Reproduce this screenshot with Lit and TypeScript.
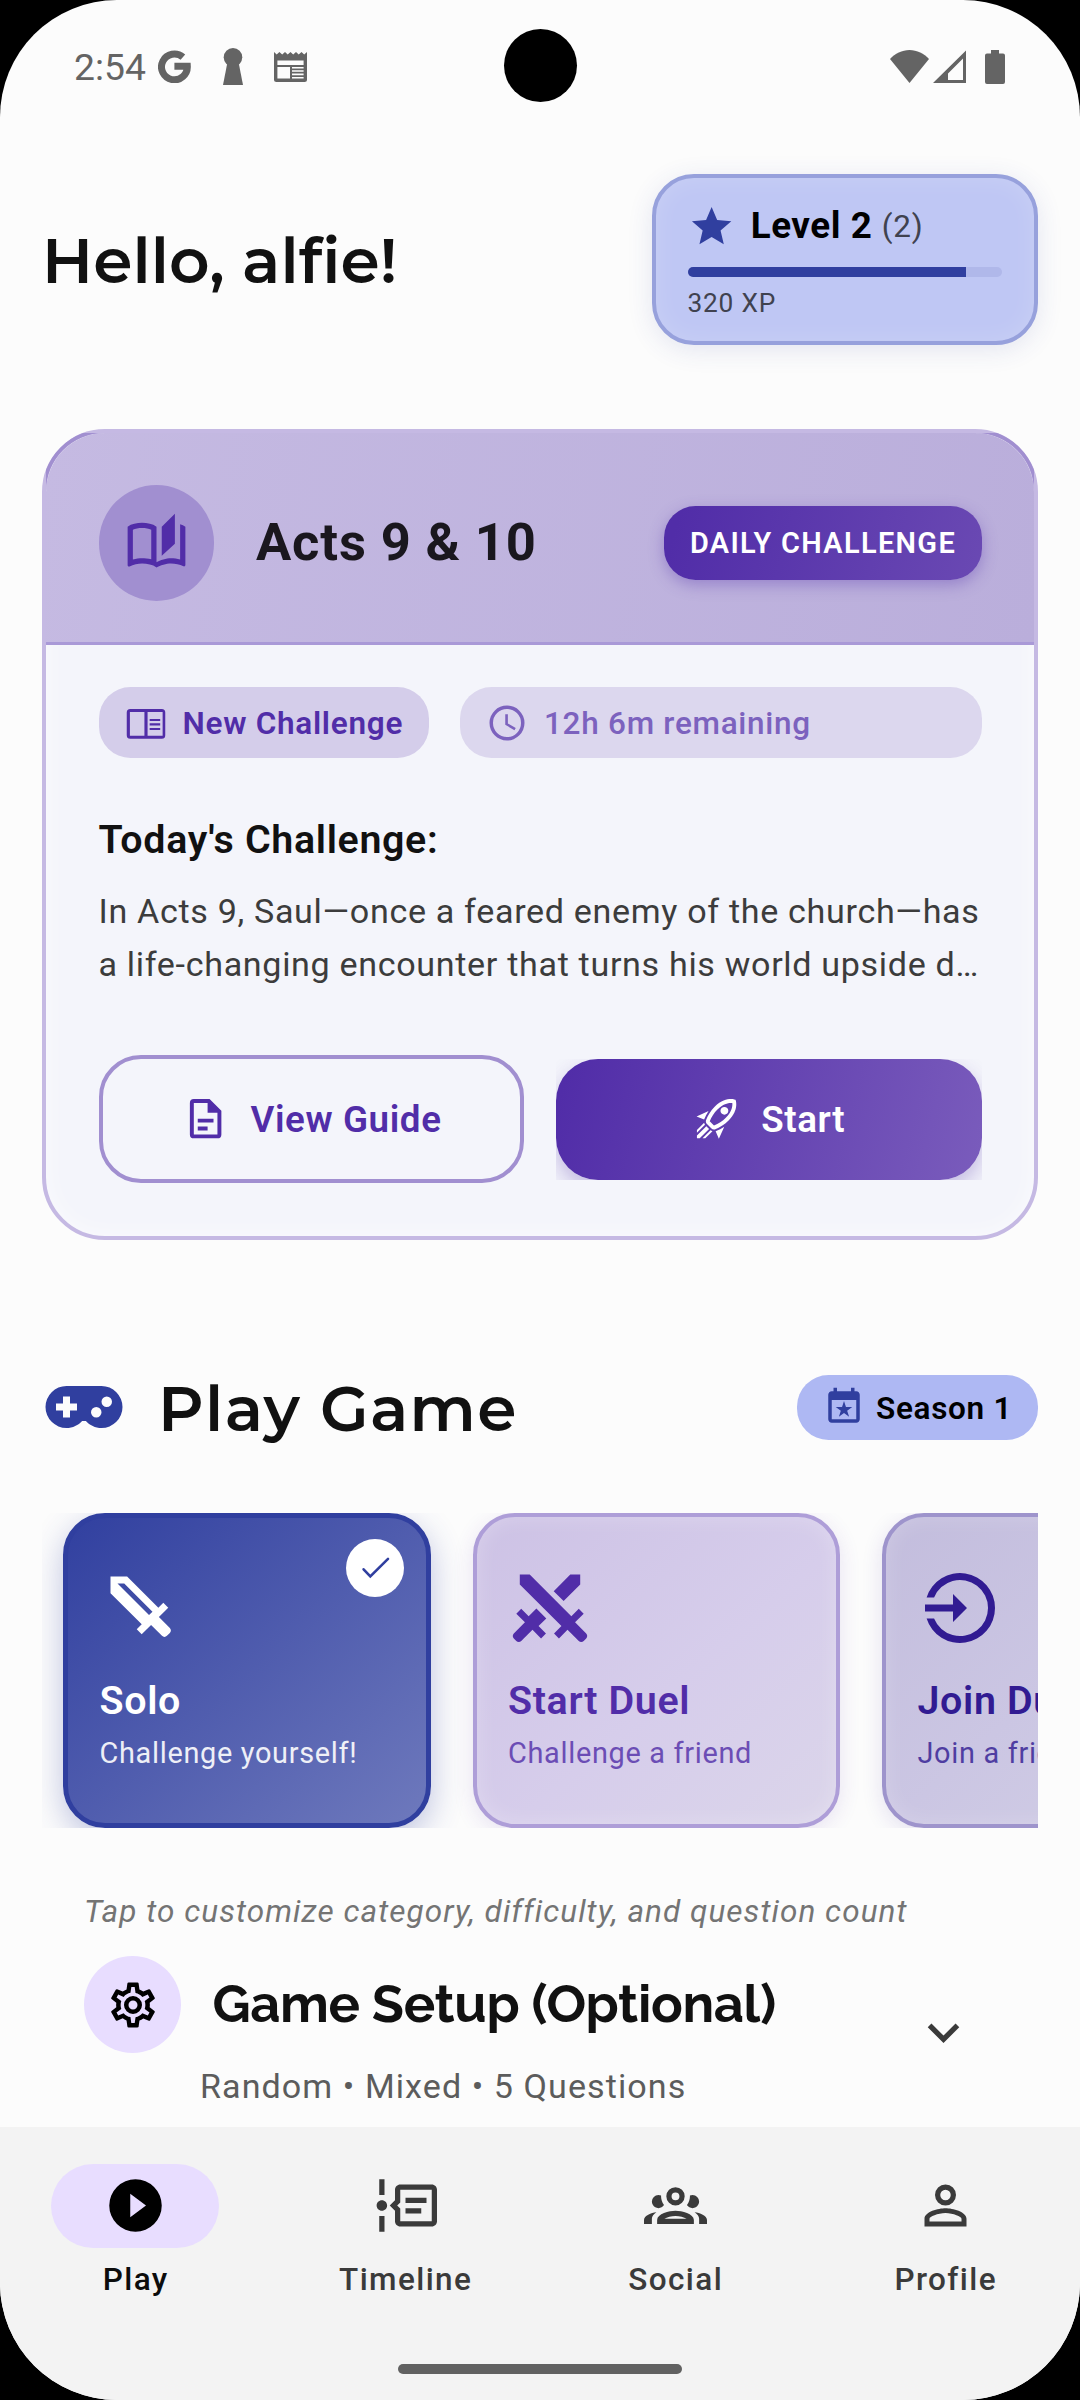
import { LitElement, html, css, svg, nothing } from "lit";
import { customElement, property } from "lit/decorators.js";
import { classMap } from "lit/directives/class-map.js";

const ICONS: Record<string, string> = {
  star: "M12,17.27L18.18,21L16.54,13.97L22,9.24L14.81,8.62L12,2L9.19,8.62L2,9.24L7.45,13.97L5.82,21L12,17.27Z",
  story:
    "M19 1L14 6V17L19 12.5V1M21 5V18.5C19.9 18.15 18.7 18 17.5 18C15.8 18 13.35 18.65 12 19.5V6C10.55 4.9 8.45 4.5 6.5 4.5C4.55 4.5 2.45 4.9 1 6V20.65C1 20.9 1.25 21.15 1.5 21.15C1.6 21.15 1.65 21.1 1.75 21.1C3.1 20.45 5.05 20 6.5 20C8.45 20 10.55 20.4 12 21.5C13.35 20.65 15.8 20 17.5 20C19.15 20 20.85 20.3 22.25 21.05C22.35 21.1 22.4 21.1 22.5 21.1C22.75 21.1 23 20.85 23 20.6V6C22.4 5.55 21.75 5.25 21 5M10 18.41C8.75 18.09 7.5 18 6.5 18C5.44 18 4.18 18.19 3 18.5V7.13C3.91 6.73 5.14 6.5 6.5 6.5C7.86 6.5 9.09 6.73 10 7.13V18.41Z",
  book: "M14.1,12.1H20.1V13.4H14.1M14.1,9.7H20.1V10.9H14.1M14.1,14.8H20.1V16H14.1M21,4H3A2,2 0 0,0 1,6V19A2,2 0 0,0 3,21H21A2,2 0 0,0 23,19V6A2,2 0 0,0 21,4M2.8,19.3V5.7H11.1V19.3H2.8M21.5,19.3H12.9V5.7H21.5V19.3Z",
  clock:
    "M12,20A8,8 0 0,0 20,12A8,8 0 0,0 12,4A8,8 0 0,0 4,12A8,8 0 0,0 12,20M12,2A10,10 0 0,1 22,12A10,10 0 0,1 12,22C6.47,22 2,17.5 2,12A10,10 0 0,1 12,2M12.5,7V12.25L17,14.92L16.25,16.15L11,13V7H12.5Z",
  doc: "M6,2A2,2 0 0,0 4,4V20A2,2 0 0,0 6,22H18A2,2 0 0,0 20,20V8L14,2H6M6,4H13V9H18V20H6V4M8,12V14H16V12H8M8,16V18H13V16H8Z",
  rocket:
    "M13.13 22.19L11.5 18.36C13.07 17.78 14.54 17 15.9 16.09L13.13 22.19M5.64 12.5L1.81 10.87L7.91 8.1C7 9.46 6.22 10.93 5.64 12.5M19.22 4C19.5 4 19.75 4 19.96 4.05C20.13 5.44 19.94 8.3 16.66 11.58C14.96 13.29 12.93 14.6 10.65 15.47L8.5 13.37C9.42 11.06 10.73 9.03 12.42 7.34C15.18 4.58 17.64 4 19.22 4M19.22 2C17.24 2 14.24 2.69 11 5.93C8.81 8.12 7.5 10.53 6.65 12.64C6.37 13.39 6.56 14.21 7.11 14.77L9.24 16.89C9.62 17.27 10.13 17.5 10.66 17.5C10.89 17.5 11.13 17.44 11.36 17.35C13.5 16.53 15.88 15.19 18.07 13C23.73 7.34 21.61 2.39 21.61 2.39S20.7 2 19.22 2M14.54 9.46C13.76 8.68 13.76 7.41 14.54 6.63S16.59 5.85 17.37 6.63C18.14 7.41 18.15 8.68 17.37 9.46C16.59 10.24 15.32 10.24 14.54 9.46M8.88 16.53L7.47 15.12L8.88 16.53M6.24 22L9.88 18.36C9.54 18.27 9.21 18.12 8.91 17.91L4.83 22H6.24M2 22H3.41L8.18 17.24L6.76 15.83L2 20.59V22M2 19.17L6.09 15.09C5.88 14.79 5.73 14.47 5.64 14.12L2 17.76V19.17Z",
  gamepad:
    "M7,6H17A6,6 0 0,1 23,12A6,6 0 0,1 17,18C15.22,18 13.63,17.23 12.53,16H11.47C10.37,17.23 8.78,18 7,18A6,6 0 0,1 1,12A6,6 0 0,1 7,6M6,9V11H4V13H6V15H8V13H10V11H8V9H6M15.5,12A1.5,1.5 0 0,0 14,13.5A1.5,1.5 0 0,0 15.5,15A1.5,1.5 0 0,0 17,13.5A1.5,1.5 0 0,0 15.5,12M18.5,9A1.5,1.5 0 0,0 17,10.5A1.5,1.5 0 0,0 18.5,12A1.5,1.5 0 0,0 20,10.5A1.5,1.5 0 0,0 18.5,9Z",
  season:
    "M19 19H5V8H19M16 1V3H8V1H6V3H5C3.89 3 3 3.89 3 5V19C3 20.11 3.9 21 5 21H19C20.11 21 21 20.11 21 19V5C21 3.9 20.11 3 19 3H18V1M10.88 12H7.27L10.19 14.11L9.08 17.56L12 15.43L14.92 17.56L13.8 14.12L16.72 12H13.12L12 8.56L10.88 12Z",
  sword:
    "M6.92,5H5L14,14L15,13.06M19.96,19.12L19.12,19.96C18.73,20.35 18.1,20.35 17.71,19.96L14.59,16.84L11.91,19.5L10.5,18.09L11.92,16.67L3,7.75V3H7.75L16.67,11.92L18.09,10.5L19.5,11.91L16.83,14.58L19.95,17.7C20.35,18.1 20.35,18.73 19.96,19.12Z",
  swords:
    "M6.2,2.44L18.1,14.34L20.22,12.22L21.63,13.63L19.16,16.1L22.34,19.28C22.73,19.67 22.73,20.3 22.34,20.69L21.63,21.4C21.24,21.79 20.61,21.79 20.22,21.4L17,18.23L14.56,20.7L13.15,19.29L15.27,17.17L3.37,5.27V2.44H6.2M15.89,10L20.63,5.26V2.44H17.8L13.06,7.18L15.89,10M10.94,15L8.11,12.13L5.9,14.34L3.78,12.22L2.37,13.63L4.84,16.1L1.66,19.29C1.27,19.68 1.27,20.31 1.66,20.7L2.37,21.41C2.76,21.8 3.39,21.8 3.78,21.41L7,18.23L9.44,20.7L10.85,19.29L8.73,17.17L10.94,15Z",
  enter:
    "M14,12L10,8V11H2V13H10V16M22,12A10,10 0 0,1 2.46,15H4.59A8,8 0 1,0 4.59,9H2.46A10,10 0 0,1 22,12Z",
  cog: "M12,8A4,4 0 0,1 16,12A4,4 0 0,1 12,16A4,4 0 0,1 8,12A4,4 0 0,1 12,8M12,10A2,2 0 0,0 10,12A2,2 0 0,0 12,14A2,2 0 0,0 14,12A2,2 0 0,0 12,10M10,22C9.75,22 9.54,21.82 9.5,21.58L9.13,18.93C8.5,18.68 7.96,18.34 7.44,17.94L4.95,18.95C4.73,19.03 4.46,18.95 4.34,18.73L2.34,15.27C2.21,15.05 2.27,14.78 2.46,14.63L4.57,12.97L4.5,12L4.57,11L2.46,9.37C2.27,9.22 2.21,8.95 2.34,8.73L4.34,5.27C4.46,5.05 4.73,4.96 4.95,5.05L7.44,6.05C7.96,5.66 8.5,5.32 9.13,5.07L9.5,2.42C9.54,2.18 9.75,2 10,2H14C14.25,2 14.46,2.18 14.5,2.42L14.87,5.07C15.5,5.32 16.04,5.66 16.56,6.05L19.05,5.05C19.27,4.96 19.54,5.05 19.66,5.27L21.66,8.73C21.79,8.95 21.73,9.22 21.54,9.37L19.43,11L19.5,12L19.43,13L21.54,14.63C21.73,14.78 21.79,15.05 21.66,15.27L19.66,18.73C19.54,18.95 19.27,19.04 19.05,18.95L16.56,17.95C16.04,18.34 15.5,18.68 14.87,18.93L14.5,21.58C14.46,21.82 14.25,22 14,22H10M11.25,4L10.88,6.61C9.68,6.86 8.62,7.5 7.85,8.39L5.44,7.35L4.69,8.65L6.8,10.2C6.4,11.37 6.4,12.64 6.8,13.8L4.68,15.36L5.43,16.66L7.86,15.62C8.63,16.5 9.68,17.14 10.87,17.38L11.24,20H12.76L13.13,17.39C14.32,17.14 15.37,16.5 16.14,15.62L18.57,16.66L19.32,15.36L17.2,13.81C17.6,12.64 17.6,11.37 17.2,10.2L19.31,8.65L18.56,7.35L16.15,8.39C15.38,7.5 14.32,6.86 13.12,6.62L12.75,4H11.25Z",
  chevron: "M7.41,8.58L12,13.17L16.59,8.58L18,10L12,16L6,10L7.41,8.58Z",
  play: "M10,16.5V7.5L16,12M12,2A10,10 0 0,0 2,12A10,10 0 0,0 12,22A10,10 0 0,0 22,12A10,10 0 0,0 12,2Z",
  timeline:
    "M4 2V8H2V2H4M2 22V16H4V22H2M5 12C5 13.11 4.11 14 3 14C1.9 14 1 13.11 1 12C1 10.9 1.9 10 3 10C4.11 10 5 10.9 5 12M22 4H10C8.9 4 8 4.9 8 6V10L6 12L8 14V18C8 19.11 8.9 20 10 20H22C23.11 20 24 19.11 24 18V6C24 4.89 23.11 4 22 4M22 18H10V13.17L8.83 12L10 10.83V6H22V18M12 9H20V11H12V9M12 13H18V15H12V13Z",
  group:
    "M12,5A3.5,3.5 0 0,0 8.5,8.5A3.5,3.5 0 0,0 12,12A3.5,3.5 0 0,0 15.5,8.5A3.5,3.5 0 0,0 12,5M12,7A1.5,1.5 0 0,1 13.5,8.5A1.5,1.5 0 0,1 12,10A1.5,1.5 0 0,1 10.5,8.5A1.5,1.5 0 0,1 12,7M5.5,8A2.5,2.5 0 0,0 3,10.5C3,11.44 3.53,12.25 4.29,12.68C4.65,12.88 5.06,13 5.5,13C5.94,13 6.35,12.88 6.71,12.68C7.08,12.47 7.39,12.17 7.62,11.81C6.89,10.86 6.5,9.7 6.5,8.5C6.5,8.41 6.5,8.31 6.5,8.22C6.2,8.08 5.86,8 5.5,8M18.5,8C18.14,8 17.8,8.08 17.5,8.22C17.5,8.31 17.5,8.41 17.5,8.5C17.5,9.7 17.11,10.86 16.38,11.81C16.5,12 16.63,12.15 16.78,12.3C16.94,12.45 17.1,12.58 17.29,12.68C17.65,12.88 18.06,13 18.5,13C18.94,13 19.35,12.88 19.71,12.68C20.47,12.25 21,11.44 21,10.5A2.5,2.5 0 0,0 18.5,8M12,14C9.66,14 5,15.17 5,17.5V19H19V17.5C19,15.17 14.34,14 12,14M4.71,14.55C2.78,14.78 0,15.76 0,17.5V19H3V17.07C3,16.06 3.69,15.22 4.71,14.55M19.29,14.55C20.31,15.22 21,16.06 21,17.07V19H24V17.5C24,15.76 21.22,14.78 19.29,14.55M12,16C13.53,16 15.24,16.5 16.23,17H7.77C8.76,16.5 10.47,16 12,16Z",
  account:
    "M12,4A4,4 0 0,1 16,8A4,4 0 0,1 12,12A4,4 0 0,1 8,8A4,4 0 0,1 12,4M12,6A2,2 0 0,0 10,8A2,2 0 0,0 12,10A2,2 0 0,0 14,8A2,2 0 0,0 12,6M12,13C14.67,13 20,14.33 20,17V20H4V17C4,14.33 9.33,13 12,13M12,14.9C9.03,14.9 5.9,16.36 5.9,17V18.1H18.1V17C18.1,16.36 14.97,14.9 12,14.9Z",
};

@customElement("mdi-icon")
class MdiIcon extends LitElement {
  static styles = css`
    :host {
      display: block;
      flex: none;
    }
    .glyph {
      display: block;
      width: 100%;
      height: 100%;
      fill: currentColor;
    }
  `;
  @property() name = "star";
  render() {
    return html`<svg class="glyph" viewBox="0 0 24 24"><path d=${ICONS[this.name]}></path></svg>`;
  }
}

@customElement("status-bar")
class StatusBar extends LitElement {
  static styles = css`
    :host {
      display: block;
      flex: none;
      height: 132px;
      color: #646464;
      font-family: Roboto, sans-serif;
    }
    .bar {
      display: flex;
      align-items: center;
      height: 100%;
      padding: 1px 75px 0 74px;
      box-sizing: border-box;
    }
    .time {
      width: 84px;
      font-size: 37.3px;
      line-height: 52px;
      white-space: nowrap;
    }
    .left,
    .right {
      display: flex;
      align-items: center;
    }
    .left {
      gap: 31.5px;
    }
    .right {
      margin-left: auto;
      align-items: flex-start;
    }
    svg {
      display: block;
      fill: currentColor;
    }
    .cell {
      margin: 0 19px 0 4px;
    }
  `;
  render() {
    return html`<div class="bar">
      <div class="time">2:54</div>
      <div class="left">
        <svg width="33" height="33" viewBox="0 0 33 33">
          <path d="M24.9 7.2A12.9 12.9 0 1 0 29.3 16.2H16.4" fill="none" stroke="currentColor" stroke-width="7"></path>
        </svg>
        <svg width="20" height="37" viewBox="0 0 20 37">
          <circle cx="10" cy="9.3" r="9.3"></circle>
          <path d="M4.5 14H15.5L20 37H0Z"></path>
        </svg>
        <svg width="33" height="30" viewBox="0 0 33 30">
          <path
            fill-rule="evenodd"
            d="M0 0L2.7 2.6L5.4 0L8.2 2.6L11 0L13.7 2.6L16.5 0L19.2 2.6L22 0L24.7 2.6L27.5 0L30.2 2.6L33 0V27.5Q33 30 30.5 30H2.5Q0 30 0 27.5ZM3.4 8.6V13H29.6V8.6ZM3.4 15V26.5H16V15ZM18 15V16.4H29.6V15ZM18 18.2V19.8H29.6V18.2ZM18 21.6V23.2H29.6V21.6ZM18 25V26.5H29.6V25Z"
          ></path>
        </svg>
      </div>
      <div class="right">
        <svg width="39" height="33" viewBox="0 0 39 33">
          <path d="M19.5 33L0 9C5 3.6 12 0 19.5 0S34 3.6 39 9Z"></path>
        </svg>
        <svg class="cell" width="33" height="33" viewBox="0 0 33 33">
          <path fill-rule="evenodd" d="M33 0.5V33H0ZM30 8.5L15 23.5V30H30Z"></path>
        </svg>
        <svg width="20" height="34" viewBox="0 0 20 34">
          <path d="M6 0H14V3.4H18Q20 3.4 20 5.4V32Q20 34 18 34H2Q0 34 0 32V5.4Q0 3.4 2 3.4H6Z"></path>
        </svg>
      </div>
    </div>`;
  }
}

@customElement("mode-card")
class ModeCard extends LitElement {
  static styles = css`
    :host {
      display: block;
      flex: none;
      font-family: Roboto, sans-serif;
    }
    .card {
      position: relative;
      box-sizing: border-box;
      width: 367.5px;
      height: 315px;
      padding: 49.5px 31.5px 0;
      border: 4px solid #ae9ed8;
      border-radius: 42px;
      color: #512da8;
      white-space: nowrap;
    }
    .solo {
      border: 5px solid #303f9f;
      padding-top: 48.5px;
      color: #fff;
      background: linear-gradient(139deg, #303f9f, #6f7abd) border-box;
      box-shadow: 0 10px 32px rgba(48, 63, 159, 0.3);
    }
    .start {
      background: linear-gradient(139deg, #cdc2e5, #d6cdeb 55%, #dbd5ea);
      box-shadow: 0 5px 21px rgba(81, 45, 168, 0.12), inset 0 0 21px rgba(255, 255, 255, 0.25);
    }
    .join {
      color: #311b92;
      border-color: #9e94cc;
      background: linear-gradient(139deg, #c3bddd, #cbc6e3 50%, #d3cfe6);
      box-shadow: 0 5px 21px rgba(49, 27, 146, 0.12), inset 0 0 21px rgba(255, 255, 255, 0.2);
    }
    mdi-icon {
      width: 84px;
      height: 84px;
    }
    .title {
      margin-top: 25.7px;
      font-size: 39.4px;
      line-height: 50px;
      font-weight: 600;
      letter-spacing: 0.65px;
    }
    .sub {
      margin-top: 6.5px;
      font-size: 28.9px;
      line-height: 40px;
      letter-spacing: 0.68px;
      opacity: 0.8;
    }
    .solo .sub {
      opacity: 0.9;
    }
    .check {
      position: absolute;
      top: 21px;
      right: 21.5px;
      width: 58px;
      height: 58px;
      border-radius: 50%;
      background: #fff;
    }
    .check svg {
      display: block;
      fill: none;
      stroke: #303f9f;
      stroke-width: 2.6;
      stroke-linecap: round;
    }
  `;
  @property() kind = "solo";
  @property() icon = "sword";
  @property() heading = "";
  @property() sub = "";
  @property({ type: Boolean }) selected = false;
  render() {
    return html`<div class=${classMap({ card: true, [this.kind]: true })}>
      <mdi-icon name=${this.icon}></mdi-icon>
      <div class="title">${this.heading}</div>
      <div class="sub">${this.sub}</div>
      ${this.selected
        ? html`<div class="check">
            <svg width="58" height="58" viewBox="0 0 58 58"><path d="M17.6 30.3L24.3 37.3L42 19.8"></path></svg>
          </div>`
        : nothing}
    </div>`;
  }
}

interface Tab {
  icon: string;
  label: string;
  active?: boolean;
}

const TABS: Tab[] = [
  { icon: "play", label: "Play", active: true },
  { icon: "timeline", label: "Timeline" },
  { icon: "group", label: "Social" },
  { icon: "account", label: "Profile" },
];

const cornerAccent = svg`<path d="M4 62A58 58 0 0 1 62 4H41A63 63 0 0 0 4 41Z"></path>`;

@customElement("app-root")
class AppRoot extends LitElement {
  static styles = css`
    :host {
      display: block;
      width: 1080px;
      height: 2400px;
      background: #000;
      font-family: Roboto, sans-serif;
      color: #111;
    }
    .screen {
      position: relative;
      display: flex;
      flex-direction: column;
      width: 1080px;
      height: 2400px;
      border-radius: 117px;
      overflow: hidden;
      background: #fcfcfc;
      white-space: nowrap;
    }
    .camera {
      position: absolute;
      left: 503.5px;
      top: 29px;
      width: 73px;
      height: 73px;
      border-radius: 50%;
      background: #000;
    }
    .greeting {
      display: flex;
      align-items: center;
      justify-content: space-between;
      margin: 42px 42px 0;
      height: 171px;
    }
    .hello,
    .play-title {
      font-family: Montserrat, Inter, sans-serif;
      font-weight: 600;
      font-size: 63px;
      line-height: 76px;
      padding-top: 3px;
    }
    .hello {
      letter-spacing: 0.1px;
    }
    .level {
      box-sizing: border-box;
      width: 386px;
      height: 171px;
      padding: 25px 32px 0 31.5px;
      border: 4px solid #97a1dc;
      border-radius: 42px;
      background: #bfc7f4;
      box-shadow: 0 5px 26px rgba(48, 63, 159, 0.12), inset 0 0 24px rgba(255, 255, 255, 0.16);
    }
    .level-row {
      display: flex;
      align-items: center;
      height: 47.25px;
    }
    .level-row mdi-icon {
      width: 47.25px;
      height: 47.25px;
      color: #303f9f;
      margin-right: 16px;
    }
    .level-name {
      font-size: 36.75px;
      font-weight: 700;
      line-height: 44px;
      letter-spacing: 0.55px;
      color: #000;
      margin-top: -2px;
    }
    .level-count {
      font-size: 31.5px;
      line-height: 44px;
      letter-spacing: 0.7px;
      color: #40424f;
      margin: 0 0 0 9.5px;
    }
    .xp-track {
      margin-top: 16.5px;
      height: 10.7px;
      border-radius: 5.3px;
      overflow: hidden;
      background: #b0b8ea;
    }
    .xp-fill {
      height: 100%;
      background: #303f9f;
    }
    .xp {
      margin-top: 10.5px;
      font-size: 26.25px;
      line-height: 31px;
      letter-spacing: 0.8px;
      color: #40424f;
    }

    .challenge {
      position: relative;
      box-sizing: border-box;
      flex: none;
      height: 811px;
      margin: 84px 42px 0;
      border: 4px solid #c5b9e3;
      border-radius: 63px;
      background: #f4f5fb;
      box-shadow: inset 0 0 24px rgba(255, 255, 255, 0.6);
    }
    .accents {
      position: absolute;
      inset: -4px;
      display: flex;
      justify-content: space-between;
      fill: #a18fd0;
      pointer-events: none;
    }
    .accents .flip {
      transform: scaleX(-1);
    }
    .challenge-head {
      display: flex;
      align-items: center;
      box-sizing: border-box;
      height: 212px;
      padding: 11px 52.5px 0;
      border-bottom: 3px solid #a999d7;
      border-radius: 59px 59px 0 0;
      background: linear-gradient(100deg, #c5bae2, #baaedb);
    }
    .story {
      display: grid;
      place-items: center;
      width: 115.5px;
      height: 115.5px;
      border-radius: 50%;
      background: #a18fd0;
      color: #512da8;
    }
    .story mdi-icon {
      width: 63px;
      height: 63px;
      margin-top: -1px;
    }
    .chapter {
      margin-left: 42px;
      margin-top: -2px;
      font-size: 52.5px;
      line-height: 64px;
      font-weight: 700;
      letter-spacing: 0.85px;
      color: #1a171e;
    }
    .daily {
      margin-left: auto;
      box-sizing: border-box;
      width: 318px;
      height: 73.5px;
      border-radius: 31.5px;
      text-align: center;
      font-size: 28.9px;
      line-height: 74px;
      font-weight: 600;
      letter-spacing: 1.35px;
      text-indent: 1px;
      color: #fff;
      background: linear-gradient(105deg, #512da8 5%, #6a49b3);
      box-shadow: 0 5px 15px rgba(81, 45, 168, 0.35);
    }
    .challenge-body {
      padding: 42px 52.5px 0;
    }
    .chips {
      display: flex;
      gap: 31.5px;
    }
    .chip {
      display: flex;
      align-items: center;
      box-sizing: border-box;
      width: 330px;
      height: 71px;
      padding-left: 26px;
      gap: 16px;
      border-radius: 31.5px;
      background: #d4cdea;
      color: #512da8;
      font-size: 31.5px;
      line-height: 40px;
      font-weight: 600;
      letter-spacing: 0.72px;
    }
    .chip .label {
      padding-top: 2.5px;
    }
    .chip mdi-icon,
    .season mdi-icon {
      width: 42px;
      height: 42px;
    }
    .chip.time {
      flex: 1;
      font-weight: 500;
      background: #dcd7ee;
      color: #7c62be;
    }
    .today {
      margin-top: 57px;
      font-size: 39.4px;
      line-height: 50px;
      font-weight: 600;
      letter-spacing: 0.65px;
    }
    .blurb {
      margin-top: 20px;
      font-size: 34.1px;
      line-height: 52.75px;
      letter-spacing: 0.67px;
      color: #3c3c3c;
    }
    .actions {
      display: flex;
      align-items: center;
      gap: 31.5px;
      margin-top: 64.3px;
    }
    .btn {
      display: flex;
      align-items: center;
      justify-content: center;
      box-sizing: border-box;
      height: 121px;
      gap: 21px;
      padding-left: 1px;
      border-radius: 42px;
      font-size: 36.75px;
      line-height: 46px;
      font-weight: 600;
      letter-spacing: 0.6px;
    }
    .btn .label {
      padding-top: 1px;
    }
    .btn mdi-icon {
      width: 47.25px;
      height: 47.25px;
    }
    .outline {
      width: 425.75px;
      height: 128.5px;
      border: 4px solid #a18fd0;
      color: #512da8;
    }
    .clip {
      width: 425.75px;
      overflow: hidden;
    }
    .filled {
      color: #fff;
      background: linear-gradient(105deg, #512da8 3%, #7a5cbc);
      box-shadow: 0 10px 21px rgba(81, 45, 168, 0.3);
    }

    .play-head {
      display: flex;
      align-items: center;
      flex: none;
      height: 84px;
      margin: 125.3px 42px 0;
    }
    .play-head .pad {
      width: 84px;
      height: 84px;
      color: #303f9f;
    }
    .play-title {
      margin-left: 32px;
      letter-spacing: 1.35px;
    }
    .season {
      display: flex;
      align-items: center;
      box-sizing: border-box;
      width: 241px;
      height: 65.5px;
      margin-left: auto;
      padding-left: 26px;
      gap: 11px;
      border-radius: 31.5px;
      background: #aeb8f3;
      color: #000;
      font-size: 31.5px;
      line-height: 40px;
      font-weight: 600;
      letter-spacing: 0.7px;
    }
    .season .label {
      padding-top: 3px;
    }
    .season mdi-icon {
      color: #303f9f;
    }
    .modes {
      display: flex;
      flex: none;
      gap: 42px;
      height: 315px;
      margin: 63.7px 42px 0;
      padding-left: 21px;
      overflow: hidden;
    }
    .hint {
      margin: 63.2px 84px 0;
      font-size: 31.5px;
      line-height: 42px;
      font-style: italic;
      letter-spacing: 1.05px;
      color: #747474;
    }
    .setup {
      display: flex;
      justify-content: space-between;
      margin: 22.8px 105px 0 84px;
    }
    .setup-row {
      display: flex;
      align-items: center;
      gap: 31.5px;
      height: 97.5px;
    }
    .gear {
      display: grid;
      place-items: center;
      width: 97px;
      height: 97.5px;
      border-radius: 50%;
      background: #e8ddff;
      color: #000;
    }
    .gear mdi-icon {
      width: 54px;
      height: 54px;
    }
    .setup-title {
      font-family: Raleway, Lato, sans-serif;
      margin-top: -1px;
      font-size: 52.5px;
      line-height: 64px;
      font-weight: 700;
      letter-spacing: -0.35px;
    }
    .setup-sub {
      margin: 11px 0 0 116px;
      font-size: 34.1px;
      line-height: 44px;
      letter-spacing: 1.07px;
      color: #5c5c5c;
    }
    .chev {
      width: 63px;
      height: 63px;
      margin-top: 45px;
      color: #3a3a3a;
    }

    .nav {
      display: grid;
      grid-template-columns: repeat(4, 1fr);
      box-sizing: border-box;
      flex: none;
      height: 273px;
      margin-top: auto;
      padding-top: 37px;
      background: #f3f3f3;
    }
    .tab {
      display: flex;
      flex-direction: column;
      align-items: center;
      color: #3a3a3a;
      font-size: 31.5px;
      line-height: 42px;
      font-weight: 500;
      letter-spacing: 1.4px;
    }
    .tab .label {
      padding-left: 1.4px;
    }
    .tab.active {
      color: #0c0c0c;
    }
    .pill {
      display: grid;
      place-items: center;
      width: 168px;
      height: 84px;
      margin-bottom: 10.5px;
      border-radius: 42px;
    }
    .active .pill {
      background: #e8ddff;
      color: #000;
    }
    .pill mdi-icon {
      width: 63px;
      height: 63px;
      margin-top: -1px;
    }
    .home {
      position: absolute;
      left: 398px;
      bottom: 26px;
      width: 284px;
      height: 10px;
      border-radius: 5px;
      background: #616161;
    }
  `;

  xp = 88.7;

  render() {
    return html`<div class="screen">
      <status-bar></status-bar>
      <div class="camera"></div>

      <section class="greeting">
        <div class="hello">Hello, alfie!</div>
        <div class="level">
          <div class="level-row">
            <mdi-icon name="star"></mdi-icon>
            <span class="level-name">Level 2</span>
            <span class="level-count">(2)</span>
          </div>
          <div class="xp-track"><div class="xp-fill" style="width:${this.xp}%"></div></div>
          <div class="xp">320 XP</div>
        </div>
      </section>

      <section class="challenge">
        <div class="challenge-head">
          <div class="story"><mdi-icon name="story"></mdi-icon></div>
          <div class="chapter">Acts 9 &amp; 10</div>
          <div class="daily">DAILY CHALLENGE</div>
        </div>
        <div class="accents">
          <svg width="67" height="67">${cornerAccent}</svg>
          <svg class="flip" width="67" height="67">${cornerAccent}</svg>
        </div>
        <div class="challenge-body">
          <div class="chips">
            <div class="chip"><mdi-icon name="book"></mdi-icon><span class="label">New Challenge</span></div>
            <div class="chip time"><mdi-icon name="clock"></mdi-icon><span class="label">12h 6m remaining</span></div>
          </div>
          <div class="today">Today's Challenge:</div>
          <div class="blurb">
            In Acts 9, Saul—once a feared enemy of the church—has<br />a life-changing encounter that turns his world
            upside d…
          </div>
          <div class="actions">
            <div class="btn outline"><mdi-icon name="doc"></mdi-icon><span class="label">View Guide</span></div>
            <div class="clip">
              <div class="btn filled"><mdi-icon name="rocket"></mdi-icon><span class="label">Start</span></div>
            </div>
          </div>
        </div>
      </section>

      <section class="play-head">
        <mdi-icon class="pad" name="gamepad"></mdi-icon>
        <div class="play-title">Play Game</div>
        <div class="season"><mdi-icon name="season"></mdi-icon><span class="label">Season 1</span></div>
      </section>
      <section class="modes">
        <mode-card kind="solo" icon="sword" heading="Solo" sub="Challenge yourself!" selected></mode-card>
        <mode-card kind="start" icon="swords" heading="Start Duel" sub="Challenge a friend"></mode-card>
        <mode-card kind="join" icon="enter" heading="Join Duel" sub="Join a friend"></mode-card>
      </section>

      <div class="hint">Tap to customize category, difficulty, and question count</div>
      <section class="setup">
        <div>
          <div class="setup-row">
            <div class="gear"><mdi-icon name="cog"></mdi-icon></div>
            <div class="setup-title">Game Setup (Optional)</div>
          </div>
          <div class="setup-sub">Random • Mixed • 5 Questions</div>
        </div>
        <mdi-icon class="chev" name="chevron"></mdi-icon>
      </section>

      <nav class="nav">
        ${TABS.map(
          (tab) => html`<div class=${classMap({ tab: true, active: !!tab.active })}>
            <div class="pill"><mdi-icon name=${tab.icon}></mdi-icon></div>
            <span class="label">${tab.label}</span>
          </div>`,
        )}
      </nav>
      <div class="home"></div>
    </div>`;
  }
}
